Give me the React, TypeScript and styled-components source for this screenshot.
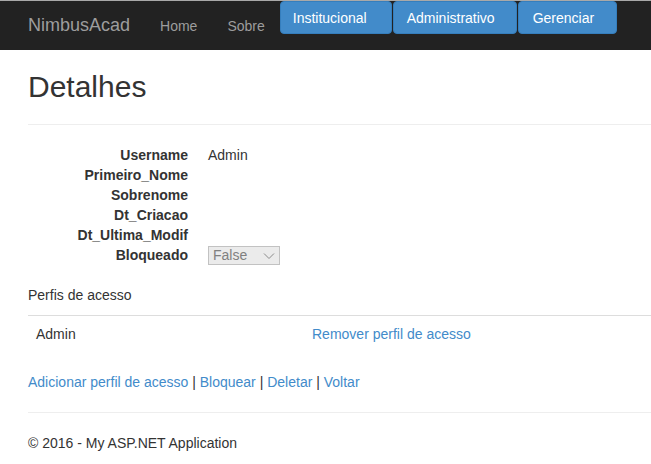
import React from "react";
import styled, { createGlobalStyle } from "styled-components";

const Global = createGlobalStyle`
  html, body { margin: 0; padding: 0; background: #fff; }
  body {
    font-family: "Liberation Sans", Arial, sans-serif;
    font-size: 14px;
    line-height: 20px;
    color: #333;
    overflow: hidden;
  }
  * { box-sizing: border-box; }
`;

const Navbar = styled.nav`
  height: 50px;
  background: #222;
  border-top: 1px solid #a9a9a9;
  display: flex;
  align-items: flex-start;
  padding-left: 13px;
`;

const Brand = styled.a`
  font-size: 18px;
  line-height: 20px;
  padding: 14px 15px 15px;
  color: #9d9d9d;
  text-decoration: none;
`;

const NavLink = styled.a`
  font-size: 14px;
  line-height: 20px;
  padding: 15px 15px 14px;
  color: #9d9d9d;
  text-decoration: none;
`;

const BtnGroup = styled.div`
  display: flex;
  gap: 1px;
`;

const NavButton = styled.button<{ $pl: number; $pr: number }>`
  font-family: "Liberation Sans", Arial, sans-serif;
  font-size: 14px;
  line-height: 19px;
  padding: 7px ${(p) => p.$pr}px 5px ${(p) => p.$pl}px;
  height: 33px;
  color: #fff;
  background: #428bca;
  border: 1px solid #357ebd;
  border-radius: 4px;
  cursor: pointer;
`;

const Main = styled.main`
  padding-left: 28px;
`;

const Title = styled.h2`
  font-size: 30px;
  font-weight: 500;
  line-height: 33px;
  margin: 20px 0 0;
  color: #333;
`;

const Rule = styled.hr<{ $top: number; $bottom: number }>`
  border: 0;
  border-top: 1px solid #eee;
  margin: ${(p) => p.$top}px 0 ${(p) => p.$bottom}px;
`;

const DefList = styled.dl`
  display: grid;
  grid-template-columns: 160px 1fr;
  column-gap: 20px;
  margin: 0 0 20px;
`;

const Term = styled.dt`
  font-weight: bold;
  text-align: right;
  white-space: nowrap;
  min-height: 20px;
`;

const Value = styled.dd`
  margin: 0;
  min-height: 20px;
`;

const FakeSelect = styled.span`
  display: inline-flex;
  align-items: center;
  justify-content: space-between;
  width: 72px;
  height: 19px;
  margin-top: 1px;
  padding: 0 4px 0 4px;
  background: #ebebeb;
  border: 1px solid #c2c2c2;
  color: #808080;
  font-size: 14px;
  line-height: 17px;
  vertical-align: top;
`;

const SectionLabel = styled.p`
  margin: 0 0 10px;
`;

const Table = styled.table`
  width: 100%;
  border-collapse: collapse;
  margin-bottom: 20px;
`;

const Cell = styled.td<{ $w?: number }>`
  padding: 8px;
  line-height: 20px;
  border-top: 1px solid #ddd;
  vertical-align: top;
  width: ${(p) => (p.$w ? `${p.$w}px` : "auto")};
`;

const Link = styled.a`
  color: #428bca;
  text-decoration: none;
`;

const Actions = styled.p`
  margin: 0;
`;

const Footer = styled.footer`
  p { margin: 0; }
`;

function Chevron() {
  return (
    <svg width="12" height="8" viewBox="0 0 12 8" aria-hidden="true">
      <path d="M1 1.5 L6 6.5 L11 1.5" fill="none" stroke="#8a8a8a" strokeWidth="1" />
    </svg>
  );
}

const fields: [string, React.ReactNode][] = [
  ["Username", "Admin"],
  ["Primeiro_Nome", ""],
  ["Sobrenome", ""],
  ["Dt_Criacao", ""],
  ["Dt_Ultima_Modif", ""],
  [
    "Bloqueado",
    <FakeSelect key="s">
      <span>False</span>
      <Chevron />
    </FakeSelect>,
  ],
];

export default function App() {
  return (
    <>
      <Global />
      <Navbar>
        <Brand href="#">NimbusAcad</Brand>
        <NavLink href="#">Home</NavLink>
        <NavLink href="#">Sobre</NavLink>
        <BtnGroup>
          <NavButton $pl={12} $pr={24}>Institucional</NavButton>
          <NavButton $pl={13} $pr={21}>Administrativo</NavButton>
          <NavButton $pl={14} $pr={22}>Gerenciar</NavButton>
        </BtnGroup>
      </Navbar>
      <Main>
        <Title>Detalhes</Title>
        <Rule $top={21} $bottom={20} />
        <DefList>
          {fields.map(([k, v]) => (
            <React.Fragment key={k}>
              <Term>{k}</Term>
              <Value>{v}</Value>
            </React.Fragment>
          ))}
        </DefList>
        <SectionLabel>Perfis de acesso</SectionLabel>
        <Table>
          <tbody>
            <tr>
              <Cell $w={276}>Admin</Cell>
              <Cell>
                <Link href="#">Remover perfil de acesso</Link>
              </Cell>
            </tr>
          </tbody>
        </Table>
        <Actions>
          <Link href="#">Adicionar perfil de acesso</Link> |{" "}
          <Link href="#">Bloquear</Link> | <Link href="#">Deletar</Link> |{" "}
          <Link href="#">Voltar</Link>
        </Actions>
        <Rule $top={20} $bottom={20} />
        <Footer>
          <p>© 2016 - My ASP.NET Application</p>
        </Footer>
      </Main>
    </>
  );
}
